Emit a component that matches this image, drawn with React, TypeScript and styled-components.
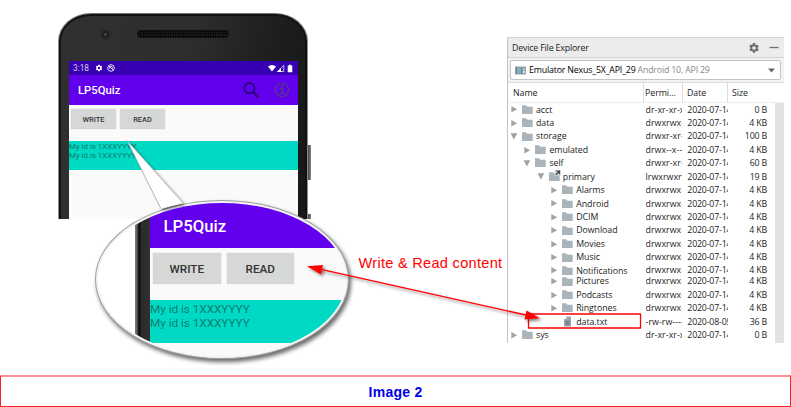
import React from 'react';
import styled, { createGlobalStyle, css } from 'styled-components';

const GlobalStyle = createGlobalStyle`
  * { box-sizing: border-box; }
  body { margin: 0; background: #fff; overflow: hidden; }
`;

const Page = styled.main`
  position: relative;
  display: flex;
  flex-direction: column;
  width: 791px;
  height: 407px;
  background: #fff;
`;

const Scene = styled.section`
  display: flex;
  justify-content: space-between;
  height: 375px;
  padding: 13px 7px 0 58px;
`;

/* ---------- phone ---------- */

const PhoneCrop = styled.div`
  width: 254px;
  height: 206px;
  overflow: hidden;
  display: flex;
  align-items: flex-start;
`;

const PhoneBody = styled.div`
  flex: none;
  width: 250px;
  height: 300px;
  padding: 47px 9px 0 10px;
  border: 1px solid #8c8c8c;
  border-top-color: #777;
  border-radius: 33px 33px 0 0 / 28px 28px 0 0;
  background: linear-gradient(100deg, #303030 0%, #2e2e2e 45%, #1d1d1d 75%, #161616 100%);
  box-shadow: inset 0 0 0 2px #111;
  position: relative;
`;

const Speaker = styled.div`
  position: absolute;
  left: 78px;
  top: 16px;
  width: 92px;
  height: 8px;
  border-radius: 5px;
  background: radial-gradient(circle, #040404 0.8px, #1e1e1e 1.1px) 0 0 / 2.5px 2.5px, #111;
  box-shadow: inset 0 0 1px 1px #111;
`;

const Camera = styled.div`
  position: absolute;
  left: 41px;
  top: 15px;
  width: 11px;
  height: 11px;
  border-radius: 50%;
  background: radial-gradient(circle, #463a46 0 1.3px, #1c1c1c 2.3px 3px, #292929 4px 5px, #2f2f2f 6px);
`;

const SideKeys = styled.div`
  display: flex;
  flex-direction: column;
  gap: 34px;
  padding-top: 132px;
`;

const SideKey = styled.div`
  width: 3px;
  height: 35px;
  background: linear-gradient(90deg, #444, #8b8585);
`;

const Screen = styled.div`
  height: 250px;
  background: #fafafa;
  font-family: Roboto, sans-serif;
`;

const StatusBar = styled.div`
  display: flex;
  align-items: center;
  height: 14px;
  padding: 0 4px;
  background: #3700b3;
  color: #fff;
  font-size: 8.3px;
`;

const Clock = styled.span`
  width: 22px;
  color: #d5cbea;
`;

const Spacer = styled.span`
  flex: 1;
`;

const AppBar = styled.header<{ $zoomed?: boolean }>`
  display: flex;
  align-items: center;
  background: #6200ee;
  color: #fff;
  font-weight: 500;
  height: ${p => (p.$zoomed ? 45 : 30)}px;
  padding: ${p => (p.$zoomed ? '1px 0 0 13.5px' : '0 8px 0 9px')};
  font-size: ${p => (p.$zoomed ? 16.7 : 11.3)}px;
`;

const ButtonRow = styled.div<{ $zoomed?: boolean }>`
  display: flex;
  gap: ${p => (p.$zoomed ? 6 : 4)}px;
  padding: ${p => (p.$zoomed ? '5px 3px 0' : '4px 2px 0')};
  height: ${p => (p.$zoomed ? 52 : 36)}px;
`;

const PushButton = styled.button<{ $zoomed?: boolean }>`
  border: 0;
  padding: 0;
  border-radius: 1px;
  background: #d6d8d7;
  box-shadow: 0 0 1px #aaa;
  color: #333;
  font-family: Roboto, sans-serif;
  font-weight: 500;
  width: ${p => (p.$zoomed ? 67.5 : 45)}px;
  height: ${p => (p.$zoomed ? 31 : 20)}px;
  font-size: ${p => (p.$zoomed ? 11.7 : 7.4)}px;
`;

const Output = styled.div<{ $zoomed?: boolean }>`
  background: #00dac5;
  color: #087d72;
  white-space: nowrap;
  height: ${p => (p.$zoomed ? 43 : 29)}px;
  padding-top: ${p => (p.$zoomed ? 2 : 1)}px;
  font-size: ${p => (p.$zoomed ? 11.7 : 7.9)}px;
  line-height: ${p => (p.$zoomed ? 14 : 9.2)}px;
`;

/* ---------- magnifier ---------- */

const Lens = styled.div`
  position: absolute;
  left: 95px;
  top: 200px;
  width: 254px;
  height: 159px;
  border-radius: 50%;
  border: 1px solid #a0a0a0;
  background: #f4f4f4;
  padding: 2px;
  box-shadow: 2px 3px 4px rgba(0, 0, 0, 0.6);
`;

const LensView = styled.div`
  display: flex;
  width: 100%;
  height: 100%;
  border-radius: 50%;
  overflow: hidden;
  padding-left: 37px;
  background: #fff;
`;

const LensFrame = styled.div`
  flex: none;
  width: 15px;
  background: linear-gradient(90deg, #777 0 1px, #333 3px, #0c0c0c 4px 5px, #2b2b2b 6px, #303030);
`;

const LensScreen = styled.div`
  flex: 1;
  background: #fafafa;
  font-family: Roboto, sans-serif;
`;

const Overlay = styled.svg`
  position: absolute;
  left: 0;
  top: 0;
  pointer-events: none;
`;

const Callout = styled.span`
  position: absolute;
  left: 358.5px;
  top: 254px;
  color: #f00;
  font: 14.6px/18px 'Liberation Sans', sans-serif;
  letter-spacing: 0.27px;
  white-space: nowrap;
`;

/* ---------- file explorer ---------- */

const Explorer = styled.aside`
  width: 277px;
  height: 306px;
  margin-top: 24px;
  border-left: 1px solid #c3c3c3;
  border-top: 1px solid #d4d4d4;
  background: #fff;
  color: #1c1c1c;
  font-family: 'Open Sans', sans-serif;
  font-size: 8.8px;
  letter-spacing: -0.17px;
  overflow: hidden;
`;

const TitleBar = styled.div`
  display: flex;
  align-items: center;
  height: 20px;
  padding: 0 5px 0 4px;
  background: #ececec;
  border-bottom: 1px solid #d2d2d2;
`;

const DeviceBar = styled.div`
  height: 25px;
  padding: 2px 3px 0 2px;
  background: #f2f2f2;
  border-bottom: 1px solid #ddd;
`;

const DevicePicker = styled.div`
  display: flex;
  align-items: center;
  height: 20px;
  padding: 0 5px 0 4px;
  border: 1px solid #c4c4c4;
  border-radius: 2px;
  background: #fff;
`;

const DeviceName = styled.span`
  margin: 0 2px 0 3px;
  color: #000;
  white-space: nowrap;
`;

const DeviceInfo = styled.span`
  color: #888;
  white-space: nowrap;
  letter-spacing: -0.18px;
`;

const columns = css`
  display: grid;
  grid-template-columns: 136px 39px 45px 39px;
`;

const HeaderRow = styled.div`
  ${columns}
  grid-template-columns: 136px 39px 45px 1fr;
  height: 20px;
  line-height: 20px;
  border-bottom: 1px solid #eee;
`;

const HeaderCell = styled.span`
  padding-left: 4px;
  border-right: 1px solid #ddd;
  white-space: nowrap;
  letter-spacing: -0.05px;
  &:first-child { padding-left: 5px; }
  &:nth-child(2) { padding-left: 1px; }
  &:last-child { border: 0; }
`;

const Tree = styled.div`
  display: flex;
  justify-content: space-between;
  height: 241px;
`;

const Rows = styled.div`
  width: 259px;
  padding-top: 0.5px;
`;

const Row = styled.div<{ $h: number }>`
  ${columns}
  height: ${p => p.$h}px;
  line-height: ${p => p.$h}px;
`;

const NameCell = styled.span<{ $depth: number }>`
  display: flex;
  align-items: center;
  padding-left: ${p => 2 + p.$depth * 13.4}px;
  white-space: nowrap;
  letter-spacing: -0.04px;
  svg { margin-bottom: 2px; }
`;

const Label = styled.span`
  margin-left: 3px;
`;

const ClipCell = styled.span<{ $w: number; $inset: number; $spacing: number }>`
  width: ${p => p.$w}px;
  margin-left: ${p => p.$inset}px;
  letter-spacing: ${p => p.$spacing}px;
  overflow: hidden;
  white-space: nowrap;
`;

const SizeCell = styled.span`
  text-align: right;
  white-space: nowrap;
`;

const Scrollbar = styled.div`
  width: 9px;
  background: #e2e2e2;
`;

/* ---------- caption ---------- */

const Caption = styled.footer`
  display: flex;
  align-items: center;
  justify-content: center;
  height: 32px;
  border: 1px solid #ff2020;
  border-top: 2px solid #ff9090;
  color: #0000e6;
  font: bold 14px 'Liberation Sans', sans-serif;
  letter-spacing: 0.25px;
`;

/* ---------- icons ---------- */

const GearIcon = ({ size, color }: { size: number; color: string }) => (
  <svg width={size} height={size} viewBox="0 0 24 24" fill={color}>
    <path d="M19.14 12.94a7 7 0 0 0 0-1.88l2.03-1.58a.5.5 0 0 0 .12-.61l-1.92-3.32a.5.5 0 0 0-.59-.22l-2.39.96a7 7 0 0 0-1.62-.94l-.36-2.54A.5.5 0 0 0 13.93 2h-3.86a.5.5 0 0 0-.48.41l-.36 2.54a7 7 0 0 0-1.62.94l-2.39-.96a.5.5 0 0 0-.59.22L2.71 8.87a.5.5 0 0 0 .12.61l2.03 1.58a7 7 0 0 0 0 1.88l-2.03 1.58a.5.5 0 0 0-.12.61l1.92 3.32c.12.22.37.29.59.22l2.39-.96c.5.38 1.03.7 1.62.94l.36 2.54c.05.24.24.41.48.41h3.86c.24 0 .44-.17.47-.41l.36-2.54a7 7 0 0 0 1.62-.94l2.39.96c.22.08.47 0 .59-.22l1.92-3.32a.5.5 0 0 0-.12-.61zM12 15.6a3.6 3.6 0 1 1 0-7.2 3.6 3.6 0 0 1 0 7.2z" />
  </svg>
);

const Twisty = ({ state }: { state: 'open' | 'closed' | 'none' }) => (
  <svg width="8" height="8" viewBox="0 0 8 8" fill="#a2a2a2">
    {state === 'closed' && <path d="M1.300 1 7.200 4.200 1.300 7.400z" />}
    {state === 'open' && <path d="M.5 1.200h6.800L3.900 7.400z" />}
  </svg>
);

const EntryIcon = ({ kind }: { kind: 'dir' | 'link' | 'file' }) => (
  <svg width="11" height="11" viewBox="0 0 11 11" overflow="visible">
    {kind === 'file' ? (
      <>
        <path d="M4.400 .5H9v10H2V3.100h2.400z" fill="#9ba4aa" />
        <path d="M3.400 5.700h4.200M3.400 7.900h4.200" stroke="#56616a" strokeWidth="1" />
      </>
    ) : (
      <path d="M0 1.300h4l1.300 1.500h5.400v7.200H0z" fill="#aab4bb" />
    )}
    {kind === 'link' && (
      <>
        <path d="M5.600-1h6v6h-6z" fill="#c9d0d4" />
        <path d="M7.300 0h3.200v3.200M10.300.2 6.800 3.800" stroke="#444" strokeWidth="1.2" fill="none" />
      </>
    )}
  </svg>
);

const IconGap = styled.span`
  width: 4px;
`;

type Entry = {
  name: string;
  depth: number;
  perm: string;
  size: string;
  state?: 'open' | 'closed' | 'none';
  kind?: 'dir' | 'link' | 'file';
  date?: string;
  h?: number;
};

const entries: Entry[] = [
  { name: 'acct', depth: 0, perm: 'dr-xr-xr-x', size: '0 B' },
  { name: 'data', depth: 0, perm: 'drwxrwx--x', size: '4 KB' },
  { name: 'storage', depth: 0, perm: 'drwxr-xr-x', size: '100 B', state: 'open' },
  { name: 'emulated', depth: 1, perm: 'drwx--x--x', size: '4 KB' },
  { name: 'self', depth: 1, perm: 'drwxr-xr-x', size: '60 B', state: 'open' },
  { name: 'primary', depth: 2, perm: 'lrwxrwxrwx', size: '19 B', state: 'open', kind: 'link' },
  { name: 'Alarms', depth: 3, perm: 'drwxrwx--x', size: '4 KB' },
  { name: 'Android', depth: 3, perm: 'drwxrwx--x', size: '4 KB' },
  { name: 'DCIM', depth: 3, perm: 'drwxrwx--x', size: '4 KB' },
  { name: 'Download', depth: 3, perm: 'drwxrwx--x', size: '4 KB' },
  { name: 'Movies', depth: 3, perm: 'drwxrwx--x', size: '4 KB' },
  { name: 'Music', depth: 3, perm: 'drwxrwx--x', size: '4 KB' },
  { name: 'Notifications', depth: 3, perm: 'drwxrwx--x', size: '4 KB', h: 10.6 },
  { name: 'Pictures', depth: 3, perm: 'drwxrwx--x', size: '4 KB' },
  { name: 'Podcasts', depth: 3, perm: 'drwxrwx--x', size: '4 KB' },
  { name: 'Ringtones', depth: 3, perm: 'drwxrwx--x', size: '4 KB' },
  { name: 'data.txt', depth: 3, perm: '-rw-rw----', size: '36 B', state: 'none', kind: 'file', date: '2020-08-05' },
  { name: 'sys', depth: 0, perm: 'dr-xr-xr-x', size: '0 B' },
];

const QuizContent = ({ zoomed }: { zoomed?: boolean }) => (
  <>
    <ButtonRow $zoomed={zoomed}>
      <PushButton $zoomed={zoomed}>WRITE</PushButton>
      <PushButton $zoomed={zoomed}>READ</PushButton>
    </ButtonRow>
    <Output $zoomed={zoomed}>
      <div>My id is 1XXXYYYY</div>
      <div>My id is 1XXXYYYY</div>
    </Output>
  </>
);

const Phone = () => (
  <PhoneCrop>
    <PhoneBody>
      <Camera />
      <Speaker />
      <Screen>
        <StatusBar>
          <Clock>3:18</Clock>
          <GearIcon size={8} color="#fff" />
          <IconGap />
          <svg width="8" height="8" viewBox="0 0 8 8" fill="none" stroke="#e4dcf5">
            <circle cx="4" cy="4" r="3.3" />
            <path d="M2 2l4 4M2.7 4.6a1.5 1.5 0 1 1 2.6 0" />
          </svg>
          <Spacer />
          <svg width="26" height="9" viewBox="0 0 26 9">
            <path d="M0 2.600Q4-.8 8 2.600L4 7.600z" fill="#fff" />
            <path d="M9.600 7.500 15.800 1.300v6.200z" fill="none" stroke="#cabbed" />
            <path d="M9 8l4-4v4z" fill="#fff" />
            <path d="M21 .8h2v.8h1.300v6.700h-4.600V1.600H21z" fill="#fff" />
          </svg>
        </StatusBar>
        <AppBar>
          LP5Quiz
          <Spacer />
          <svg width="48" height="18" viewBox="0 0 48 18" fill="none">
            <circle cx="7.3" cy="7.2" r="5.1" stroke="#2c0080" strokeWidth="2" />
            <path d="m11 11 5.400 5.400" stroke="#2c0080" strokeWidth="2.4" />
            <circle cx="40" cy="9" r="6.6" stroke="#55358a" strokeWidth="1.3" />
            <path d="M38 7.800h2.500v4.500M37.800 12.600h4.800" stroke="#55358a" strokeWidth="1.5" />
            <circle cx="40" cy="5.2" r="1.2" fill="#55358a" />
          </svg>
        </AppBar>
        <QuizContent />
      </Screen>
    </PhoneBody>
    <SideKeys>
      <SideKey />
      <SideKey />
    </SideKeys>
  </PhoneCrop>
);

const FileExplorer = () => (
  <Explorer>
    <TitleBar>
      Device File Explorer
      <Spacer />
      <GearIcon size={12} color="#6e6e6e" />
      <svg width="19" height="10" viewBox="0 0 19 10">
        <path d="M9.500 4.500h9" stroke="#6e6e6e" strokeWidth="1.3" />
      </svg>
    </TitleBar>
    <DeviceBar>
      <DevicePicker>
        <svg width="11" height="9" viewBox="0 0 11 9">
          <path d="M0 .5h11v8H0z" fill="#98a2a8" />
          <path d="M2 1.500h3.500v6H2z" fill="#74b4d2" />
          <path d="M1.400 1v7M6.600 1v7" stroke="#6c777e" strokeWidth=".8" />
          <path d="M8 3h2v1H8zM8 5h2v2H8z" fill="#dde2e5" />
        </svg>
        <DeviceName>Emulator Nexus_5X_API_29</DeviceName>
        <DeviceInfo>Android 10, API 29</DeviceInfo>
        <Spacer />
        <svg width="7" height="5" viewBox="0 0 7 5">
          <path d="M0 .5h7L3.500 4.500z" fill="#666" />
        </svg>
      </DevicePicker>
    </DeviceBar>
    <HeaderRow>
      <HeaderCell>Name</HeaderCell>
      <HeaderCell>Permi...</HeaderCell>
      <HeaderCell>Date</HeaderCell>
      <HeaderCell>Size</HeaderCell>
    </HeaderRow>
    <Tree>
      <Rows>
        {entries.map(e => (
          <Row key={e.name} $h={e.h ?? 13.45}>
            <NameCell $depth={e.depth}>
              <Twisty state={e.state ?? 'closed'} />
              <IconGap />
              <EntryIcon kind={e.kind ?? 'dir'} />
              <Label>{e.name}</Label>
            </NameCell>
            <ClipCell $w={36.5} $inset={1.5} $spacing={0.05}>{e.perm}</ClipCell>
            <ClipCell $w={40.5} $inset={4.3} $spacing={-0.18}>{e.date ?? '2020-07-14'}</ClipCell>
            <SizeCell>{e.size}</SizeCell>
          </Row>
        ))}
      </Rows>
      <Scrollbar />
    </Tree>
  </Explorer>
);

export default function App() {
  return (
    <>
      <GlobalStyle />
      <Page>
        <Scene>
          <Phone />
          <FileExplorer />
        </Scene>
        <Lens>
          <LensView>
            <LensFrame />
            <LensScreen>
              <AppBar $zoomed>LP5Quiz</AppBar>
              <QuizContent zoomed />
            </LensScreen>
          </LensView>
        </Lens>
        <Overlay width="791" height="407" viewBox="0 0 791 407">
          <defs>
            <filter id="soft" x="-30%" y="-30%" width="160%" height="160%">
              <feDropShadow dx="2" dy="2" stdDeviation="1.6" floodOpacity="0.5" />
            </filter>
          </defs>
          <path d="M161 208.500 127 140.500 183 203z" fill="#fff" filter="url(#soft)" />
          <path d="M161 208.500 127 140.500 183 203" fill="none" stroke="#999" strokeWidth=".6" />
          <path d="M528.500 314h112v14h-112z" fill="none" stroke="#f00" strokeWidth="1.3" />
          <g filter="url(#soft)" fill="#f00">
            <path d="M320 269.200 528 315.500" stroke="#f00" strokeWidth="1.3" />
            <path d="m307 266.300 16-1.300-2 9.500zM540 318.300l-15.500 1.200 2-9z" />
          </g>
        </Overlay>
        <Callout>Write &amp; Read content</Callout>
        <Caption>Image 2</Caption>
      </Page>
    </>
  );
}
